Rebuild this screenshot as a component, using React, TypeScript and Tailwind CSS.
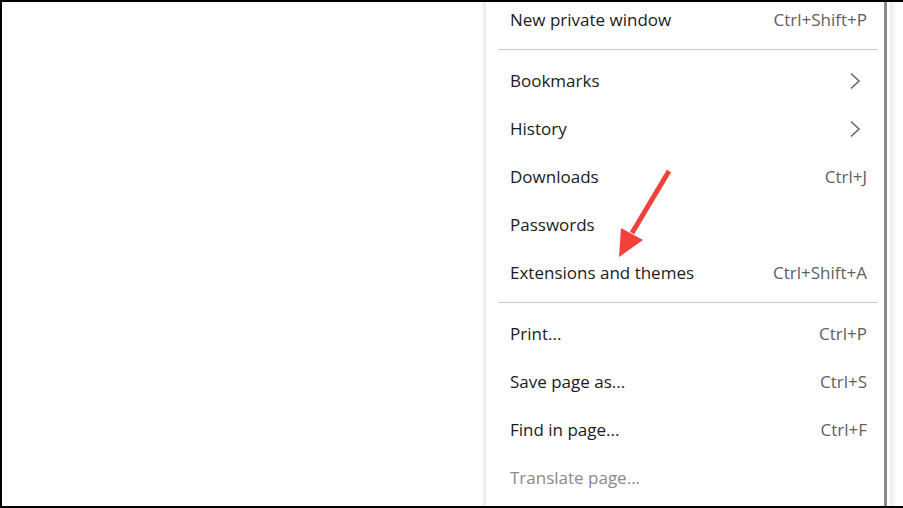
type Item = {
  label: string;
  shortcut?: string;
  submenu?: boolean;
  disabled?: boolean;
};

const groupA: Item[] = [
  { label: "Bookmarks", submenu: true },
  { label: "History", submenu: true },
  { label: "Downloads", shortcut: "Ctrl+J" },
  { label: "Passwords" },
  { label: "Extensions and themes", shortcut: "Ctrl+Shift+A" },
];

const groupB: Item[] = [
  { label: "Print...", shortcut: "Ctrl+P" },
  { label: "Save page as...", shortcut: "Ctrl+S" },
  { label: "Find in page...", shortcut: "Ctrl+F" },
  { label: "Translate page...", disabled: true },
];

function Chevron() {
  return (
    <svg width="12" height="18" viewBox="0 0 12 18" fill="none" className="mr-[6px]">
      <path d="M2 1.5l8 7.5-8 7.5" stroke="#666" strokeWidth="1.6" strokeLinejoin="miter" />
    </svg>
  );
}

function Row({ item }: { item: Item }) {
  return (
    <div className="flex h-[48px] items-center justify-between pl-[24px] pr-[17px]">
      <span className={item.disabled ? "text-[#8a8a8a]" : "text-[#1b1b1b]"}>{item.label}</span>
      {item.shortcut && <span className="text-[#5f5f5f]">{item.shortcut}</span>}
      {item.submenu && <Chevron />}
    </div>
  );
}

function Divider() {
  return (
    <div className="pl-[12px] pr-[6px] pt-[5px] pb-[7px]">
      <div className="h-px bg-[#c9c9c9]" />
    </div>
  );
}

export default function App() {
  return (
    <div
      className="relative flex h-[508px] w-[903px] overflow-hidden border-t-2 border-b-2 border-l-2 border-black bg-white text-[17px]"
      style={{ fontFamily: '"Segoe UI", "Open Sans", sans-serif' }}
    >
      <div className="flex-1" />
      <div className="w-[5px] bg-gradient-to-r from-white to-[#e9e9e9]" />
      <div className="w-[398px] overflow-hidden bg-white">
        <div className="-mt-[6px]">
          <Row item={{ label: "New private window", shortcut: "Ctrl+Shift+P" }} />
          <Divider />
          {groupA.map((it) => (
            <Row key={it.label} item={it} />
          ))}
          <Divider />
          {groupB.map((it) => (
            <Row key={it.label} item={it} />
          ))}
        </div>
      </div>
      <div className="w-[3px] bg-[#8a8a8a]" />
      <div className="w-[3px] bg-white" />
      <div className="w-[7px] bg-gradient-to-r from-[#ececec] to-white" />
      <div className="w-[6px]" />

      <svg className="absolute left-0 top-[-2px]" width="903" height="508" viewBox="0 0 903 508">
        <line x1="667" y1="171" x2="630" y2="233" stroke="#f0423a" strokeWidth="5" />
        <polygon points="619,228 641,240 617,257" fill="#f0423a" />
      </svg>
    </div>
  );
}
